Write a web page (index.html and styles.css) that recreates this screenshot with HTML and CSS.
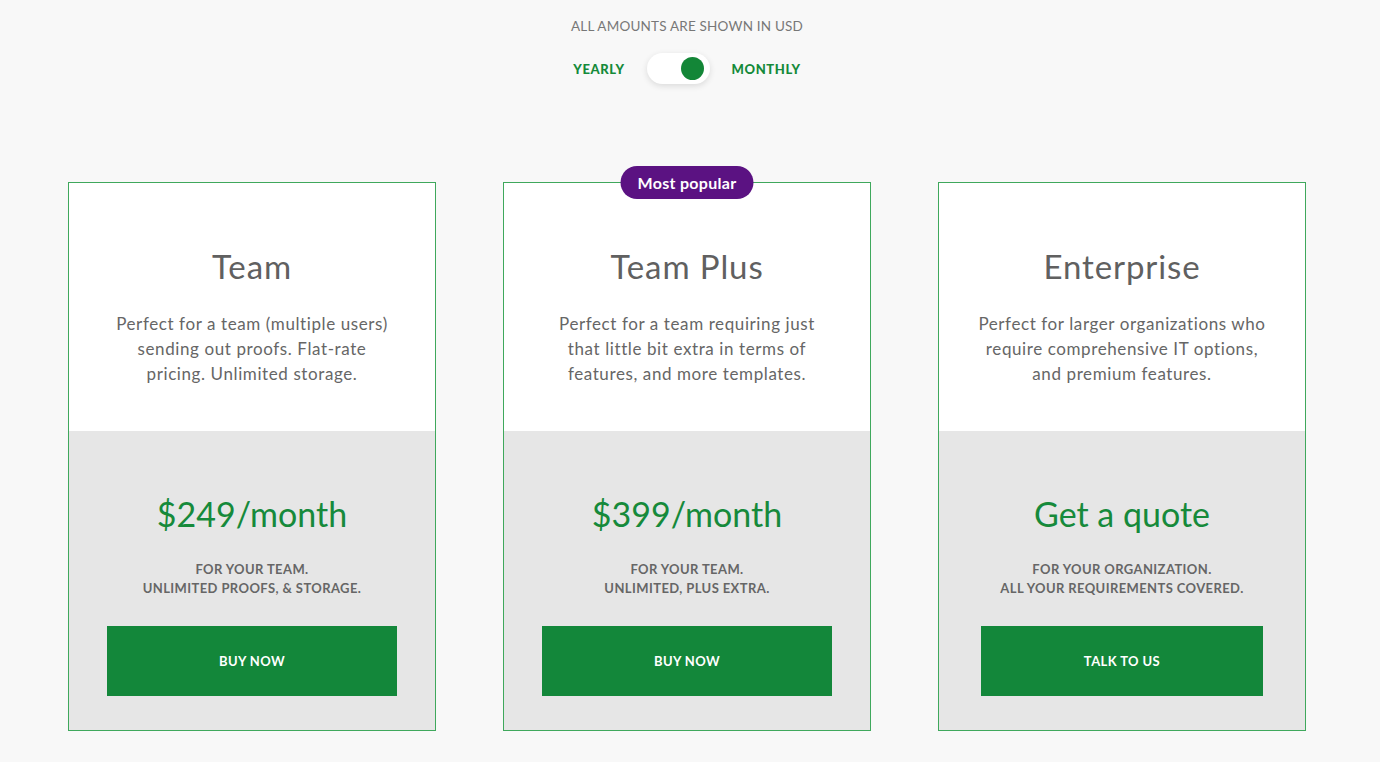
FILE: index.html
```html
<!DOCTYPE html>
<html lang="en">
<head>
<meta charset="utf-8">
<title>Pricing</title>
<link rel="stylesheet" href="styles.css">
</head>
<body>
<div class="page">
  <header class="billing">
    <p class="currency">ALL AMOUNTS ARE SHOWN IN USD</p>
    <div class="switch-row">
      <span class="period">YEARLY</span>
      <span class="switch"><span class="knob"></span></span>
      <span class="period">MONTHLY</span>
    </div>
  </header>
  <section class="plans">
    <article class="plan">
      <div class="plan-top">
        <h2 class="plan-name">Team</h2>
        <p class="plan-desc">Perfect for a team (multiple users)<br>sending out proofs. Flat-rate<br>pricing. Unlimited storage.</p>
      </div>
      <div class="plan-bottom">
        <div class="price">$249/month</div>
        <p class="price-note">FOR YOUR TEAM.<br>UNLIMITED PROOFS, &amp; STORAGE.</p>
        <a class="cta" href="#">BUY NOW</a>
      </div>
    </article>
    <article class="plan">
      <span class="badge">Most popular</span>
      <div class="plan-top">
        <h2 class="plan-name">Team Plus</h2>
        <p class="plan-desc">Perfect for a team requiring just<br>that little bit extra in terms of<br>features, and more templates.</p>
      </div>
      <div class="plan-bottom">
        <div class="price">$399/month</div>
        <p class="price-note">FOR YOUR TEAM.<br>UNLIMITED, PLUS EXTRA.</p>
        <a class="cta" href="#">BUY NOW</a>
      </div>
    </article>
    <article class="plan">
      <div class="plan-top">
        <h2 class="plan-name">Enterprise</h2>
        <p class="plan-desc">Perfect for larger organizations who<br>require comprehensive IT options,<br>and premium features.</p>
      </div>
      <div class="plan-bottom plan-bottom-wide">
        <div class="price">Get a quote</div>
        <p class="price-note">FOR YOUR ORGANIZATION.<br>ALL YOUR REQUIREMENTS COVERED.</p>
        <a class="cta" href="#">TALK TO US</a>
      </div>
    </article>
  </section>
</div>
</body>
</html>
```

FILE: styles.css
```css
* { box-sizing: border-box; }
html, body { margin: 0; padding: 0; }
body {
  background: #f8f8f8;
  font-family: Lato, "Open Sans", Arial, sans-serif;
  color: #666;
  width: 1380px;
  height: 762px;
  overflow: hidden;
}
.page {
  width: 1238px;
  margin-left: 68px;
}
.billing {
  display: flex;
  flex-direction: column;
  align-items: center;
  padding-top: 17px;
}
.currency {
  margin: 0;
  font-size: 13.5px;
  line-height: 18px;
  color: #777;
  letter-spacing: 0.2px;
}
.switch-row {
  display: flex;
  align-items: center;
  gap: 22px;
  margin-top: 18px;
}
.period {
  font-size: 13px;
  font-weight: 900;
  color: #158a3a;
  letter-spacing: 0.6px;
}
.switch {
  width: 63px;
  height: 31px;
  border-radius: 16px;
  background: #fff;
  box-shadow: 0 2px 6px rgba(0,0,0,0.12);
  display: flex;
  align-items: center;
  justify-content: flex-end;
  padding-right: 6px;
}
.knob {
  width: 23px;
  height: 23px;
  border-radius: 50%;
  background: #138637;
}
.plans {
  display: grid;
  grid-template-columns: repeat(3, 1fr);
  gap: 67px;
  margin-top: 98px;
}
.plan {
  position: relative;
  border: 1px solid #3fa85c;
  display: flex;
  flex-direction: column;
  text-align: center;
}
.badge {
  position: absolute;
  top: -17px;
  left: 50%;
  transform: translateX(-50%);
  background: #5b1282;
  color: #fff;
  font-weight: 700;
  font-size: 16px;
  line-height: 33px;
  height: 33px;
  padding: 0 17px;
  border-radius: 17px;
  white-space: nowrap;
  letter-spacing: 0.3px;
}
.plan-top {
  background: #fff;
  height: 248px;
  padding-top: 63px;
}
.plan-name {
  margin: 0;
  font-weight: 400;
  font-size: 33px;
  line-height: 40px;
  color: #606060;
  letter-spacing: 0.9px;
}
.plan-desc {
  margin: 25px 0 0;
  font-size: 17px;
  line-height: 25px;
  color: #666;
  letter-spacing: 0.6px;
}
.plan-bottom {
  background: #e6e6e6;
  padding: 63px 38px 34px;
  display: flex;
  flex-direction: column;
  align-items: stretch;
}
.plan-bottom-wide { padding-left: 42px; padding-right: 42px; }
.price {
  font-size: 34px;
  line-height: 40px;
  color: #168a3b;
}
.price-note {
  margin: 26px 0 0;
  font-size: 13px;
  line-height: 19px;
  font-weight: 700;
  color: #666;
  letter-spacing: 0.4px;
}
.cta {
  margin-top: 28px;
  height: 70px;
  display: flex;
  align-items: center;
  justify-content: center;
  background: #13873a;
  color: #fff;
  font-size: 13px;
  font-weight: 700;
  text-decoration: none;
  letter-spacing: 0.4px;
}
```
